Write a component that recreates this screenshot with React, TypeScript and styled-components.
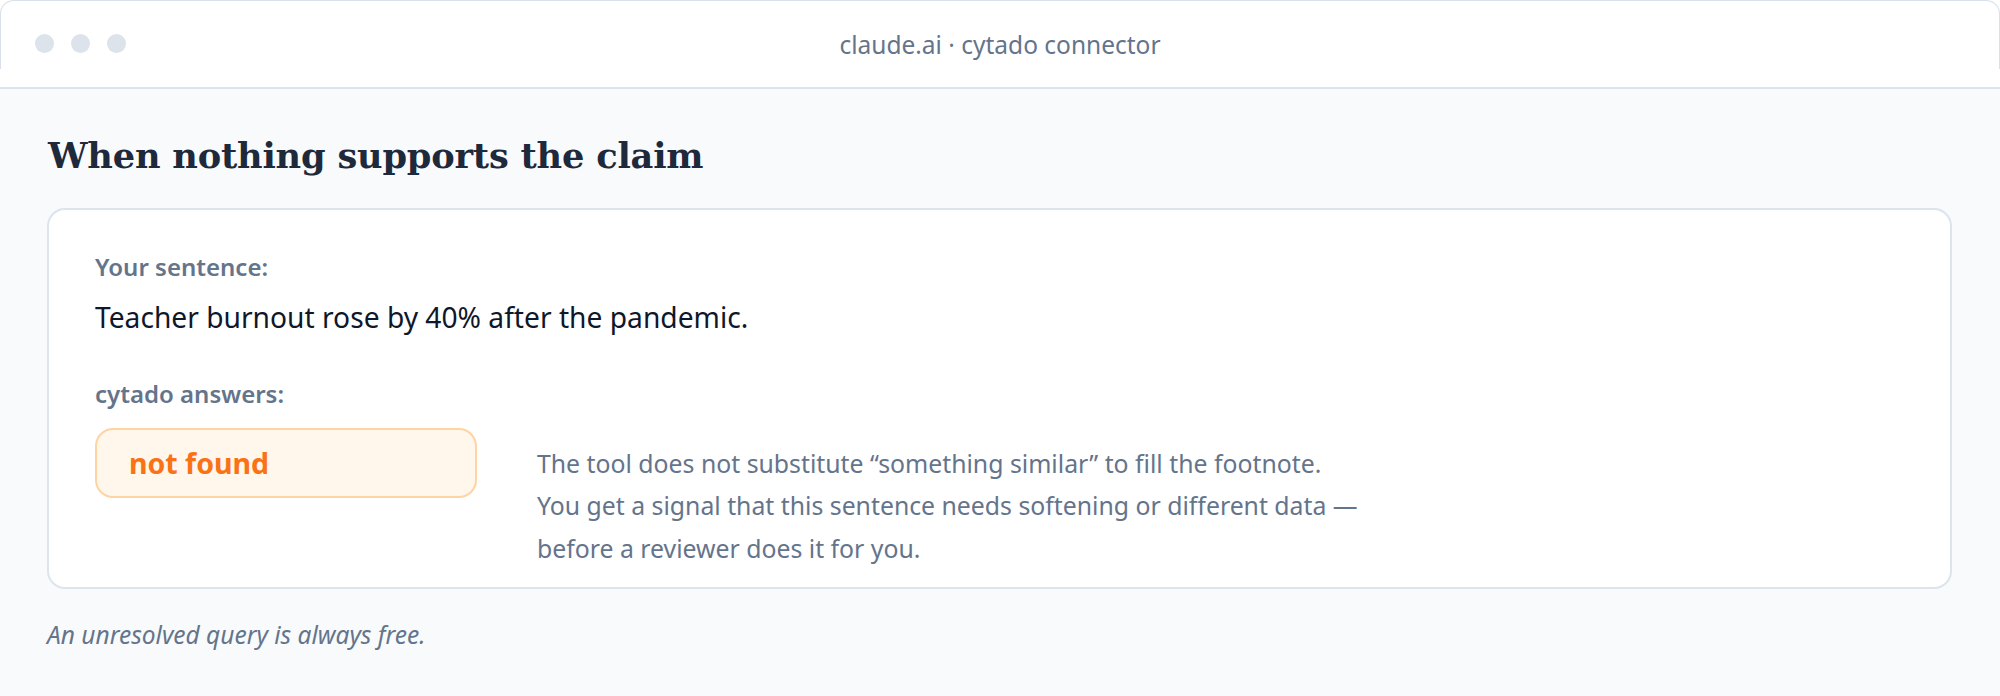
import React from "react";
import styled, { createGlobalStyle } from "styled-components";

const GlobalStyle = createGlobalStyle`
  html, body {
    margin: 0;
    padding: 0;
    background: #f8fafc;
  }
  body {
    font-family: "Noto Sans", "Open Sans", sans-serif;
    color: #1e293b;
  }
  * { box-sizing: border-box; }
`;

const Page = styled.div`
  min-height: 696px;
  background: #f8fafc;
`;

const ChromeBar = styled.header`
  position: relative;
  height: 89px;
  background: #ffffff;
  border-bottom: 2px solid #dde4ec;
  display: grid;
  grid-template-columns: 1fr auto 1fr;
  align-items: center;
  padding: 0 35px;

  &::before {
    content: "";
    position: absolute;
    top: 0;
    left: 0;
    right: 0;
    height: 68px;
    border: 1px solid #d9e0e9;
    border-bottom: none;
    border-radius: 14px 14px 0 0;
    pointer-events: none;
  }
`;

const Dots = styled.div`
  display: flex;
  gap: 17px;
`;

const Dot = styled.span`
  width: 19px;
  height: 19px;
  border-radius: 50%;
  background: #dce3eb;
`;

const ChromeTitle = styled.div`
  font-size: 24.5px;
  color: #64748b;
  padding-top: 1px;
  white-space: nowrap;
`;

const Main = styled.main`
  padding: 46px 48px 40px 47px;
`;

const Heading = styled.h1`
  margin: 0 0 31px 1px;
  font-family: "DejaVu Serif", "Liberation Serif", serif;
  font-weight: 700;
  font-size: 35.2px;
  line-height: 42px;
  color: #1e293b;
  letter-spacing: -0.2px;
`;

const Card = styled.section`
  background: #ffffff;
  border: 2px solid #dee4ec;
  border-radius: 18px;
  padding: 41px 47px 18px 46px;
`;

const Label = styled.div<{ $gap?: number }>`
  font-size: 24px;
  font-weight: 600;
  line-height: 32px;
  color: #64748b;
  margin-top: ${(p) => p.$gap ?? 0}px;
`;

const Sentence = styled.p`
  margin: 13px 0 0;
  font-size: 28.2px;
  line-height: 42px;
  color: #0f172a;
`;

const AnswerRow = styled.div`
  display: grid;
  grid-template-columns: 382px 1fr;
  column-gap: 60px;
  align-items: start;
  margin-top: 17.5px;
`;

const Badge = styled.div`
  height: 70px;
  display: flex;
  align-items: center;
  padding: 0 32px;
  background: #fff6ec;
  border: 2px solid #fed4a3;
  border-radius: 18px;
  font-size: 28.5px;
  font-weight: 700;
  color: #f97316;
`;

const Explanation = styled.p`
  margin: 14px 0 0;
  font-size: 24.8px;
  line-height: 42.5px;
  color: #64748b;
`;

const Footnote = styled.p`
  margin: 30px 0 0;
  font-size: 24.5px;
  line-height: 32px;
  font-style: italic;
  color: #64748b;
`;

export default function App() {
  return (
    <>
      <GlobalStyle />
      <Page>
        <ChromeBar>
          <Dots>
            <Dot />
            <Dot />
            <Dot />
          </Dots>
          <ChromeTitle>claude.ai · cytado connector</ChromeTitle>
          <div />
        </ChromeBar>
        <Main>
          <Heading>When nothing supports the claim</Heading>
          <Card>
            <Label>Your sentence:</Label>
            <Sentence>Teacher burnout rose by 40% after the pandemic.</Sentence>
            <Label $gap={40}>cytado answers:</Label>
            <AnswerRow>
              <Badge>not found</Badge>
              <Explanation>
                The tool does not substitute “something similar” to fill the
                footnote.
                <br />
                You get a signal that this sentence needs softening or different
                data —
                <br />
                before a reviewer does it for you.
              </Explanation>
            </AnswerRow>
          </Card>
          <Footnote>An unresolved query is always free.</Footnote>
        </Main>
      </Page>
    </>
  );
}
